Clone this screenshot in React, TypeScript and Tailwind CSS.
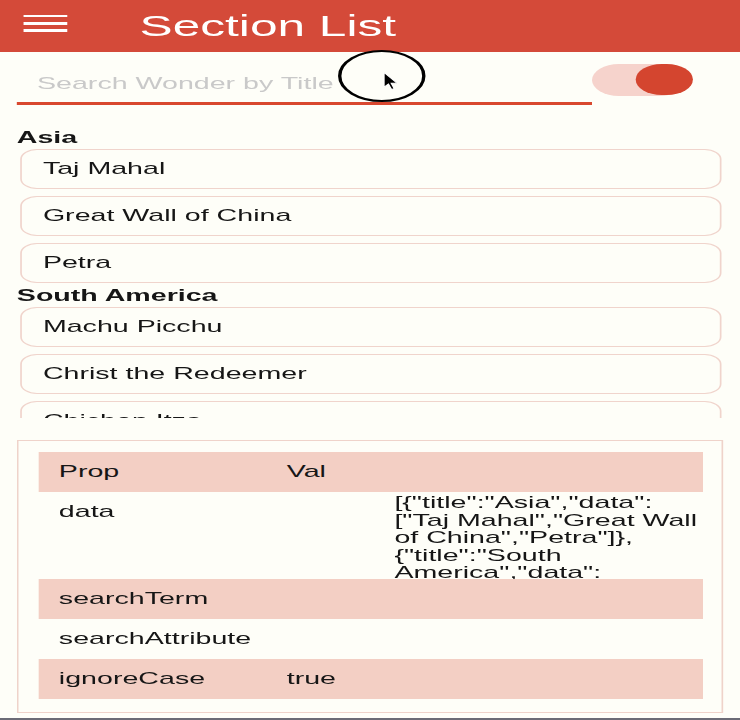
import React from 'react';

const SECTIONS = [
  { title: 'Asia', data: ['Taj Mahal', 'Great Wall of China', 'Petra'] },
  { title: 'South America', data: ['Machu Picchu', 'Christ the Redeemer', 'Chichen Itza'] },
];

const ROWS = [
  { prop: 'searchTerm', val: '' },
  { prop: 'searchAttribute', val: '' },
  { prop: 'ignoreCase', val: 'true' },
];

const App: React.FC = () => {
  return (
    <div className="w-[740px] h-[720px] overflow-hidden bg-[#fefef8]">
      {/* the recording is stretched sideways, so lay out at phone width and stretch */}
      <div className="relative w-[440px] h-[720px] origin-top-left scale-x-[1.6818] flex flex-col font-['Liberation_Sans',Arial,sans-serif] text-[#161616]">
        {/* App bar */}
        <header className="h-[52px] shrink-0 bg-[#d44a39] flex items-start">
          <div className="ml-[14px] mt-[15px] w-[26px] flex flex-col gap-[4.8px]">
            <div className="h-[2.4px] bg-white" />
            <div className="h-[2.4px] bg-white" />
            <div className="h-[2.4px] bg-white" />
          </div>
          <h1 className="ml-[43px] mt-[10.5px] text-[29.5px] leading-[29px] text-white">Section List</h1>
        </header>

        {/* Search + switch */}
        <div className="flex items-start shrink-0">
          <div className="ml-[9.5px] w-[342.5px] h-[53px] border-b-[3px] border-[#d9482f] pt-[20px] pl-[12.5px]">
            <span className="text-[17px] leading-[20px] text-[#c9c9c9]">Search Wonder by Title</span>
          </div>
          <div className="relative mt-[11px] w-[60px] h-[34px]">
            <div className="absolute left-0 top-[1px] w-[56px] h-[32px] rounded-full bg-[#f6d3cc]" />
            <div className="absolute right-0 top-[1px] w-[34px] h-[31px] rounded-full bg-[#d4452f]" />
          </div>
        </div>

        {/* Section list */}
        <div className="h-[313px] shrink-0 overflow-hidden pt-[20px]">
          {SECTIONS.map((section) => (
            <div key={section.title}>
              <div className="h-[24px] pl-[10px] text-[17px] leading-[25px] font-bold">{section.title}</div>
              <div className="flex flex-col gap-[7px] px-[11.5px]">
                {section.data.map((item) => (
                  <div
                    key={item}
                    className="h-[40px] flex items-center pl-[13px] border border-[#f0d4cc] rounded-[10px] text-[17px]"
                  >
                    {item}
                  </div>
                ))}
              </div>
            </div>
          ))}
        </div>

        {/* Props panel */}
        <div className="mt-[22px] mx-[10px] h-[273px] shrink-0 border border-[#efd3ca] px-[11.5px] pt-[11px] text-[17px]">
          <div className="h-[40px] flex items-center bg-[#f3cfc4]">
            <div className="w-[148px] pl-[12.5px]">Prop</div>
            <div>Val</div>
          </div>
          <div className="h-[87px] flex overflow-hidden">
            <div className="w-[148px] pl-[12.5px] pt-[9px] leading-[21.5px]">data</div>
            <div className="ml-auto w-[183px] pt-[2px] leading-[17.5px] break-words">
              {'[{"title":"Asia","data":["Taj Mahal","Great Wall of China","Petra"]},{"title":"South America","data":["Machu Picchu","Christ the Redeemer","Chichen Itza"]}]'}
            </div>
          </div>
          {ROWS.map((row, i) => (
            <div key={row.prop} className={`h-[40px] flex items-center ${i % 2 === 0 ? 'bg-[#f3cfc4]' : ''}`}>
              <div className="w-[148px] pl-[12.5px]">{row.prop}</div>
              <div>{row.val}</div>
            </div>
          ))}
        </div>

        <div className="mt-auto h-[2px] bg-[#6b6b76]" />

        {/* tap indicator + pointer from the recording */}
        <div className="absolute left-[201px] top-[50px] w-[52px] h-[52px] rounded-full border-2 border-black" />
        <svg className="absolute left-[227.5px] top-[72px] w-[8.5px] h-[18px]" viewBox="0 0 12 19" preserveAspectRatio="none">
          <path d="M0.5 0.5 L0.5 16 L4.2 12.6 L6.8 18.5 L9 17.5 L6.5 11.8 L11.5 11.8 Z" fill="#000" stroke="#fff" strokeWidth="1" />
        </svg>
      </div>
    </div>
  );
};

export default App;
